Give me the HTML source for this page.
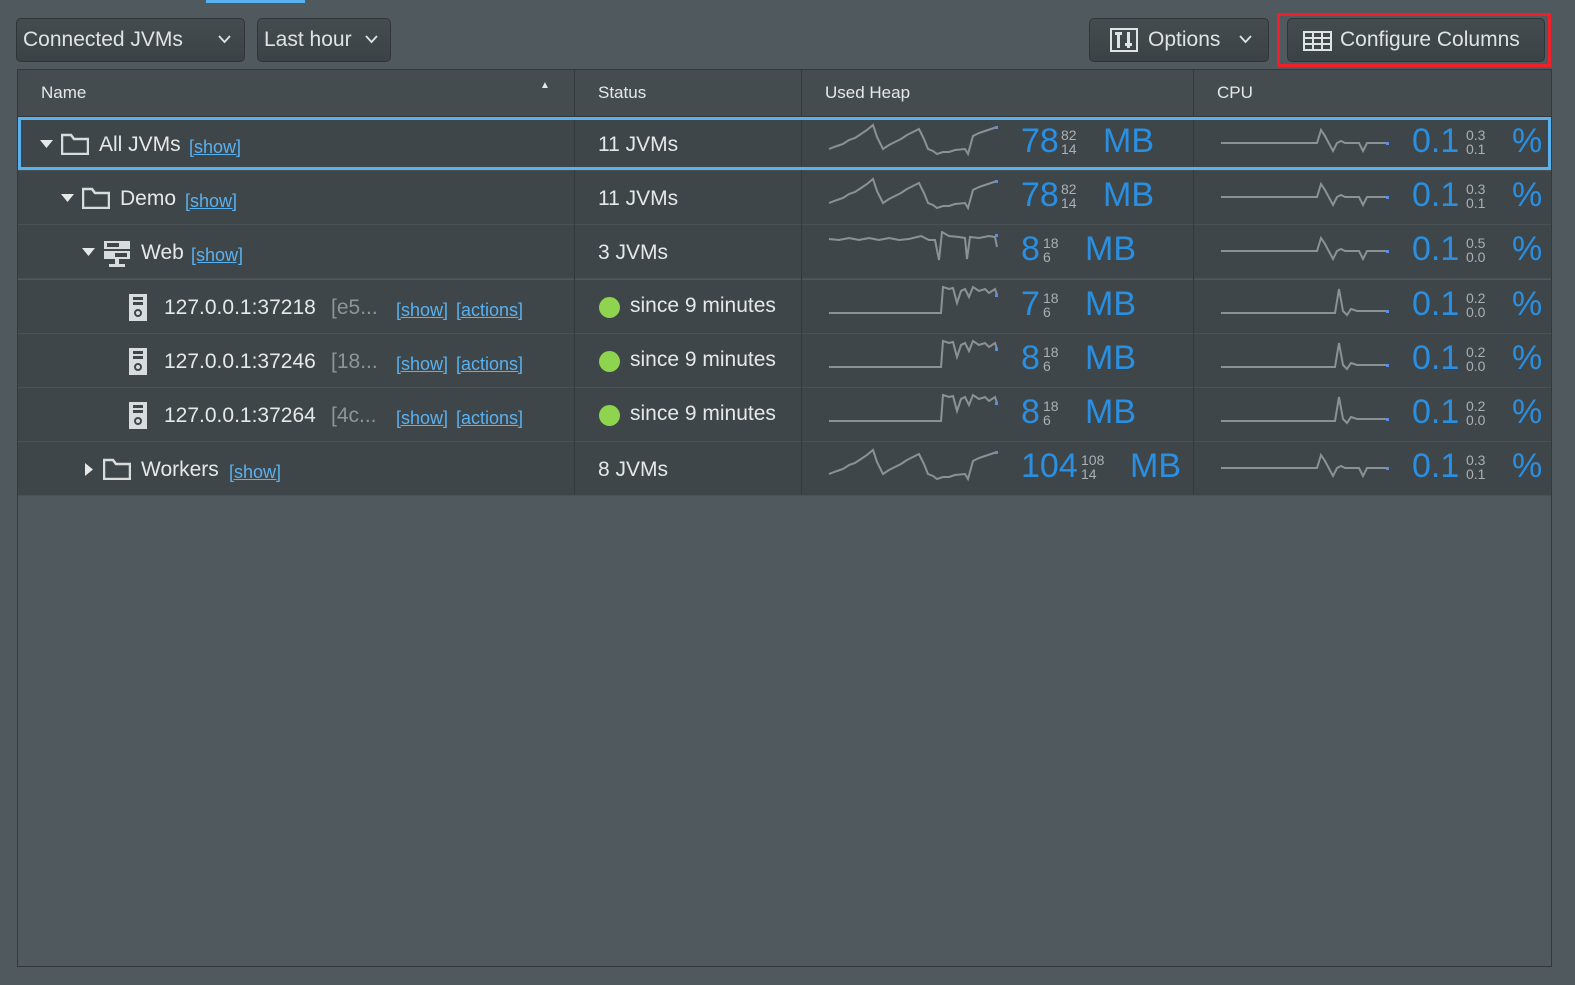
<!DOCTYPE html>
<html><head><meta charset="utf-8"><style>
*{margin:0;padding:0;box-sizing:border-box}
body{width:1575px;height:985px;background:#50595d;font-family:"Liberation Sans",sans-serif;color:#e6e8e8;position:relative;overflow:hidden}
.a{position:absolute}
.btn{position:absolute;top:18px;height:44px;border:1px solid #2f3538;border-radius:5px;background:linear-gradient(#454c50,#3b4245);font-size:21px;color:#dfe3e4;line-height:42px;padding-left:6px}
.chev{position:absolute;top:16px}
.tbl{position:absolute;left:17px;top:69px;width:1535px;height:898px;border:1px solid #33393c;background:#50595d}
.hdr{position:absolute;left:0;top:0;width:100%;height:47px;background:#454c50;border-bottom:1px solid #33393c;font-size:17px;color:#e6e8e8}
.row{position:absolute;left:0;width:1533px;height:54px;background:#3f4649;border-bottom:1px solid #4a5256;font-size:21px}
.vl{position:absolute;top:0;width:1px;height:424px;background:#33393c}
.lk{color:#5ab1ef;text-decoration:underline;font-size:18px}
.big{color:#2a8fe0;font-size:34px}
.sm{color:#aab0b3;font-size:14px;line-height:14px;position:absolute}
.dot{position:absolute;width:21px;height:21px;border-radius:50%;background:#8fd44f}
svg.sp{position:absolute}
</style></head><body>
<div class="a" style="left:206px;top:0;width:99px;height:3px;background:#5ab1ef"></div>
<div class="btn" style="left:16px;width:229px">Connected JVMs<svg class="chev" style="left:201px" width="13" height="9"><path d="M1 1L6.5 7L12 1" fill="none" stroke="#dfe3e4" stroke-width="1.8"/></svg></div>
<div class="btn" style="left:257px;width:134px">Last hour<svg class="chev" style="left:107px" width="13" height="9"><path d="M1 1L6.5 7L12 1" fill="none" stroke="#dfe3e4" stroke-width="1.8"/></svg></div>
<div class="btn" style="left:1089px;width:180px;padding-left:58px"><svg class="a" style="left:20px;top:9px" width="28" height="24"><rect x="1" y="1" width="26" height="22" fill="none" stroke="#dfe3e4" stroke-width="2"/><rect x="7" y="4" width="3" height="16" fill="#dfe3e4"/><rect x="17" y="4" width="3" height="16" fill="#dfe3e4"/><rect x="5" y="4" width="7" height="3" fill="#dfe3e4"/><rect x="15" y="15" width="7" height="3" fill="#dfe3e4"/></svg>Options<svg class="chev" style="left:149px" width="13" height="9"><path d="M1 1L6.5 7L12 1" fill="none" stroke="#dfe3e4" stroke-width="1.8"/></svg></div>
<div class="a" style="left:1277px;top:13px;width:274px;height:54px;border:3px solid #f0202a"></div>
<div class="btn" style="left:1287px;width:258px;padding-left:52px"><svg class="a" style="left:15px;top:12px" width="29" height="20"><rect x="1" y="1" width="27" height="18" fill="none" stroke="#dfe3e4" stroke-width="2"/><path d="M1 7H28M1 13H28M10 1V19M19 1V19" stroke="#dfe3e4" stroke-width="2"/></svg>Configure Columns</div>

<div class="tbl">
<div class="hdr"><span class="a" style="left:23px;top:13px">Name</span><span class="a" style="left:522px;top:10px;font-size:10px">&#9650;</span><span class="a" style="left:580px;top:13px">Status</span><span class="a" style="left:807px;top:13px">Used Heap</span><span class="a" style="left:1199px;top:13px">CPU</span></div>

<div id="rows"></div>
<div class="vl" style="left:556px;top:0"></div><div class="vl" style="left:783px;top:0"></div><div class="vl" style="left:1175px;top:0"></div>
<div class="a" style="left:0;top:47px;width:1533px;height:53px;border:3px solid #5ab1ef;pointer-events:none"></div>
</div>
<script>
const heapA="M0 25 L8 22 L14 20 L20 16 L26 14 L32 10 L38 6 L44 1 L48 13 L54 25 L60 21 L66 18 L72 15 L78 11 L84 8 L90 5 L95 15 L99 25 L104 27 L108 30 L114 28 L120 28 L126 26 L136 25 L139 30 L144 12 L150 9 L156 7 L162 5 L168 3";
const heapB="M0 7 L10 8 L20 6 L30 8 L40 6 L50 8 L60 6 L70 8 L80 7 L92 4 L100 8 L106 8 L110 28 L113 0 L120 4 L130 5 L136 6 L138 27 L141 5 L150 6 L160 4 L166 5 L168 15";
const heapC="M0 28 L112 28 L114 2 L120 4 L124 3 L128 18 L132 6 L136 4 L140 12 L144 2 L150 6 L156 4 L160 8 L166 4 L168 10";
const cpu="M0 15 L96 15 L100 2 L104 8 L112 23 L116 15 L120 13 L124 15 L130 15 L138 15 L142 23 L146 15 L168 15";
const cpu2="M0 24 L114 24 L118 0 L122 22 L126 26 L130 20 L136 22 L168 22";
const rows=[
{lvl:0,arrow:"down",icon:"folder",name:"All JVMs",st:"11 JVMs",h:["78","82","14"],hp:heapA,cp:cpu,c:["0.3","0.1"]},
{lvl:1,arrow:"down",icon:"folder",name:"Demo",st:"11 JVMs",h:["78","82","14"],hp:heapA,cp:cpu,c:["0.3","0.1"]},
{lvl:2,arrow:"down",icon:"server",name:"Web",st:"3 JVMs",h:["8","18","6"],hp:heapB,cp:cpu,c:["0.5","0.0"]},
{lvl:3,icon:"jvm",name:"127.0.0.1:37218",tag:"[e5...",st:"since 9 minutes",dot:1,h:["7","18","6"],hp:heapC,cp:cpu2,c:["0.2","0.0"]},
{lvl:3,icon:"jvm",name:"127.0.0.1:37246",tag:"[18...",st:"since 9 minutes",dot:1,h:["8","18","6"],hp:heapC,cp:cpu2,c:["0.2","0.0"]},
{lvl:3,icon:"jvm",name:"127.0.0.1:37264",tag:"[4c...",st:"since 9 minutes",dot:1,h:["8","18","6"],hp:heapC,cp:cpu2,c:["0.2","0.0"]},
{lvl:2,arrow:"right",icon:"folder",name:"Workers",st:"8 JVMs",h:["104","108","14"],hp:heapA,cp:cpu,c:["0.3","0.1"]}];
let html="";
rows.forEach((r,i)=>{
 const top=47+i*54.2, x=22+r.lvl*21;
 let s=`<div class="row" style="top:${top}px">`;
 if(r.arrow=="down") s+=`<svg class="a" style="left:${x}px;top:23px" width="13" height="9"><path d="M0 0H13L6.5 8Z" fill="#e6e8e8"/></svg>`;
 if(r.arrow=="right") s+=`<svg class="a" style="left:${x+3}px;top:21px" width="9" height="13"><path d="M0 0V13L8 6.5Z" fill="#e6e8e8"/></svg>`;
 const ix=x+21;
 if(r.icon=="folder") s+=`<svg class="a" style="left:${ix}px;top:16px" width="28" height="22"><path d="M1 21V2H10L13 6H27V21Z" fill="none" stroke="#d8dcdd" stroke-width="2.5"/></svg>`;
 if(r.icon=="server") s+=`<svg class="a" style="left:${ix}px;top:15px" width="28" height="28"><rect x="1" y="1" width="26" height="8" fill="#d8dcdd"/><rect x="1" y="11" width="26" height="8" fill="#d8dcdd"/><rect x="4" y="3" width="12" height="4" fill="#3f4649"/><rect x="12" y="13" width="12" height="4" fill="#3f4649"/><rect x="12" y="19" width="4" height="5" fill="#d8dcdd"/><rect x="6" y="24" width="16" height="3" fill="#d8dcdd"/></svg>`;
 if(r.icon=="jvm") s+=`<svg class="a" style="left:110px;top:13px" width="20" height="29"><rect x="1" y="1" width="18" height="27" fill="#d8dcdd"/><rect x="5" y="4" width="10" height="3" fill="#3f4649"/><rect x="5" y="9" width="10" height="3" fill="#3f4649"/><circle cx="10" cy="20" r="3" fill="none" stroke="#3f4649" stroke-width="2"/></svg>`;
 const tx = r.icon=="jvm"? 146 : ix+38;
 s+=`<span class="a" style="left:${tx}px;top:16px">${r.name}</span>`;
 if(r.tag){ s+=`<span class="a" style="left:313px;top:16px;color:#8e9597">${r.tag}</span><span class="a lk" style="left:378px;top:20px">[show]</span><span class="a lk" style="left:438px;top:20px">[actions]</span>`;}
 else { const w={"All JVMs":88,"Demo":63,"Web":48,"Workers":86}[r.name]; s+=`<span class="a lk" style="left:${tx+w+2}px;top:20px">[show]</span>`;}
 if(r.dot) s+=`<div class="dot" style="left:581px;top:17px"></div><span class="a" style="left:612px;top:14px">since 9 minutes</span>`;
 else s+=`<span class="a" style="left:580px;top:16px">${r.st}</span>`;
 const hy = r.icon=="jvm"?4:6;
 s+=`<svg class="sp" style="left:810px;top:${hy}px" width="172" height="34"><path d="${r.hp}" fill="none" stroke="#8b9194" stroke-width="2" transform="translate(1,1)"/><rect x="167" y="${r.icon=='jvm'?10:3}" width="3" height="3" fill="#5a8ee0"/></svg>`;
 const L=r.h[0].length;
 const subX={1:1025,2:1043,3:1063}[L], mbX={1:1067,2:1085,3:1112}[L];
 s+=`<span class="a big" style="left:1003px;top:5px">${r.h[0]}</span><span class="sm" style="left:${subX}px;top:11px">${r.h[1]}</span><span class="sm" style="left:${subX}px;top:25px">${r.h[2]}</span><span class="a big" style="left:${mbX}px;top:5px">MB</span>`;
 const cy = r.icon=="jvm"?8:10;
 s+=`<svg class="sp" style="left:1202px;top:${cy}px" width="172" height="36"><path d="${r.cp}" fill="none" stroke="#8b9194" stroke-width="2" transform="translate(1,1)"/><rect x="166" y="${r.icon=='jvm'?22:15}" width="3" height="3" fill="#5a8ee0"/></svg>`;
 s+=`<span class="a big" style="left:1394px;top:5px">0.1</span><span class="sm" style="left:1448px;top:11px">${r.c[0]}</span><span class="sm" style="left:1448px;top:25px">${r.c[1]}</span><span class="a big" style="left:1494px;top:5px">%</span>`;
 s+="</div>"; html+=s;});
document.getElementById("rows").innerHTML=html;
</script>
</body></html>
